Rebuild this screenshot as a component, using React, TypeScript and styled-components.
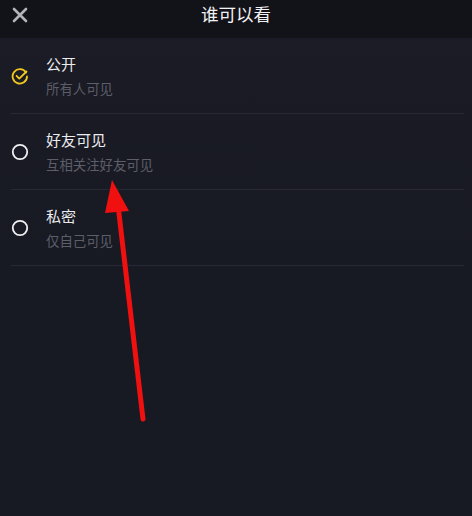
import React from "react";
import styled, { createGlobalStyle } from "styled-components";

const Global = createGlobalStyle`
  html, body { margin: 0; padding: 0; background: #171923; }
  body { width: 472px; height: 516px; overflow: hidden; }
  #root { height: 516px; }
`;

const Page = styled.div`
  position: relative;
  width: 472px;
  height: 516px;
  display: flex;
  flex-direction: column;
  background: linear-gradient(#1b1c25, #171923 60%);
  font-family: "Noto Sans CJK SC", "Noto Sans", sans-serif;
  overflow: hidden;
`;

const Header = styled.div`
  height: 38px;
  flex: none;
  display: grid;
  grid-template-columns: 40px 1fr 40px;
  align-items: start;
  background: #121219;
`;

const CloseBtn = styled.div`
  display: flex;
  align-items: center;
  justify-content: center;
  height: 30px;
`;

const Title = styled.div`
  text-align: center;
  color: #f2f2f4;
  font-size: 17.5px;
  line-height: 28px;
`;

const List = styled.div`
  display: flex;
  flex-direction: column;
`;

const Row = styled.div`
  display: flex;
  align-items: center;
  height: 76px;
  box-sizing: border-box;
  margin-left: 11px;
  margin-right: 8px;
  border-bottom: 1px solid #272833;
`;

const IconBox = styled.div`
  width: 18px;
  height: 18px;
  display: flex;
  align-items: center;
  justify-content: center;
  margin-right: 17px;
  margin-top: 0px;
`;

const Texts = styled.div`
  display: flex;
  flex-direction: column;
  gap: 5px;
  margin-top: 0px;
`;

const Label = styled.div`
  color: #ececef;
  font-size: 15px;
  line-height: 20px;
`;

const Sub = styled.div`
  color: #5d5e68;
  font-size: 13.4px;
  line-height: 18px;
`;

const Arrow = styled.svg`
  position: absolute;
  left: 0;
  top: 0;
  pointer-events: none;
`;

const CloseIcon = () => (
  <svg width="18" height="18" viewBox="0 0 18 18">
    <path d="M3 3 L15 15 M15 3 L3 15" stroke="#b4b4b8" strokeWidth="2.6" strokeLinecap="round" />
  </svg>
);

const CheckedIcon = () => (
  <svg width="20" height="20" viewBox="0 0 20 20">
    <path
      d="M16.6 6.2 A8 8 0 1 0 17.8 10.5"
      fill="none"
      stroke="#f2c81e"
      strokeWidth="2"
      strokeLinecap="round"
    />
    <path
      d="M6.2 9.8 L9.2 12.8 L17.2 5"
      fill="none"
      stroke="#f2c81e"
      strokeWidth="2"
      strokeLinecap="round"
      strokeLinejoin="round"
    />
  </svg>
);

const EmptyIcon = () => (
  <svg width="20" height="20" viewBox="0 0 20 20">
    <circle cx="10" cy="10" r="8" fill="none" stroke="#f0f0f2" strokeWidth="2" />
  </svg>
);

const options = [
  { label: "公开", sub: "所有人可见", checked: true },
  { label: "好友可见", sub: "互相关注好友可见", checked: false },
  { label: "私密", sub: "仅自己可见", checked: false },
];

export default function App() {
  return (
    <>
      <Global />
      <Page>
        <Header>
          <CloseBtn>
            <CloseIcon />
          </CloseBtn>
          <Title>谁可以看</Title>
          <div />
        </Header>
        <List>
          {options.map((o) => (
            <Row key={o.label}>
              <IconBox>{o.checked ? <CheckedIcon /> : <EmptyIcon />}</IconBox>
              <Texts>
                <Label>{o.label}</Label>
                <Sub>{o.sub}</Sub>
              </Texts>
            </Row>
          ))}
        </List>
        <Arrow width="472" height="516" viewBox="0 0 472 516">
          <line x1="143" y1="419" x2="118" y2="205" stroke="#f01010" strokeWidth="5" strokeLinecap="round" />
          <polygon points="112,180 105,213 129,211" fill="#f01010" />
        </Arrow>
      </Page>
    </>
  );
}
